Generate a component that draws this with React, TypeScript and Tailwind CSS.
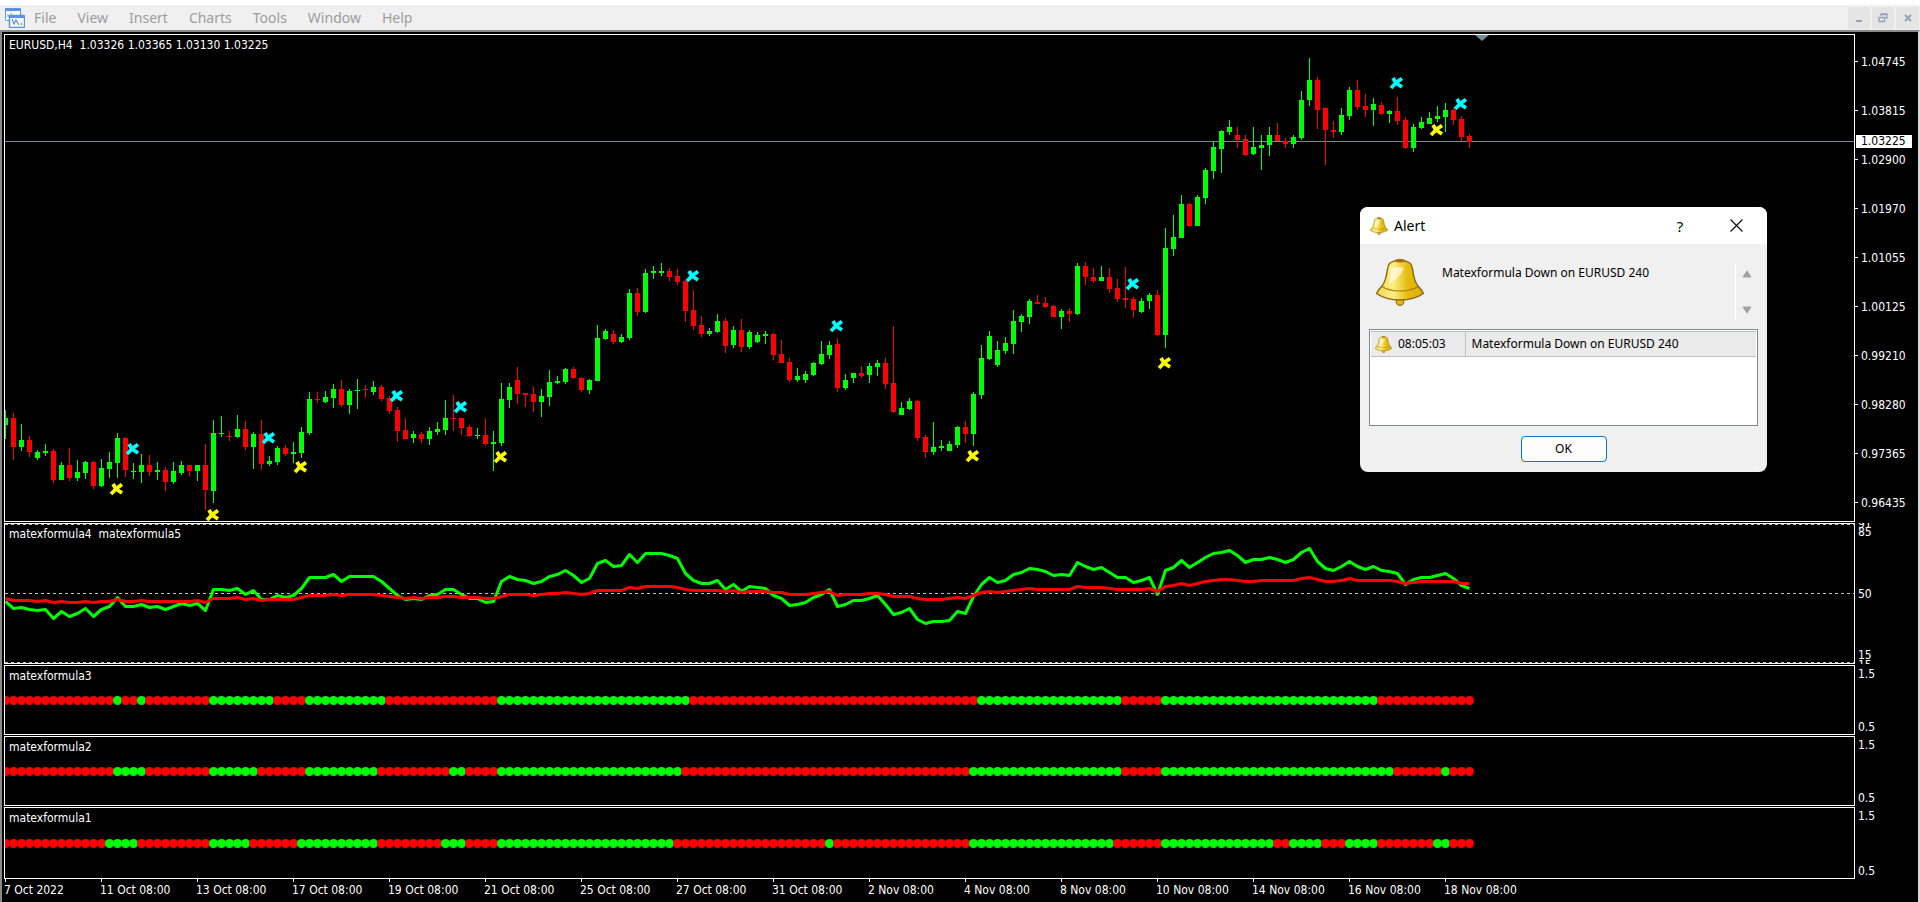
import React from 'react';

const GREEN = '#00ff00';
const RED = '#ff0000';
const BAR_STEP = 8;

const MENU_ITEMS = ['File', 'View', 'Insert', 'Charts', 'Tools', 'Window', 'Help'];

const PRICE_LABELS = [
  '1.04745', '1.03815', '1.02900', '1.01970', '1.01055',
  '1.00125', '0.99210', '0.98280', '0.97365', '0.96435',
];

const DATE_LABELS = [
  '7 Oct 2022', '11 Oct 08:00', '13 Oct 08:00', '17 Oct 08:00', '19 Oct 08:00', '21 Oct 08:00',
  '25 Oct 08:00', '27 Oct 08:00', '31 Oct 08:00', '2 Nov 08:00', '4 Nov 08:00', '8 Nov 08:00',
  '10 Nov 08:00', '14 Nov 08:00', '16 Nov 08:00', '18 Nov 08:00',
];

// [up, high, body top, body bottom, low], one entry per H4 bar
const CANDLES: number[][] = [
  [1, 375, 383, 390, 404], [0, 378, 383, 412, 425], [1, 389, 405, 412, 416], [0, 401, 405, 417, 422],
  [1, 415, 417, 423, 425], [1, 409, 416, 418, 421], [0, 414, 416, 445, 448], [1, 427, 430, 445, 445],
  [0, 413, 430, 443, 446], [1, 425, 437, 443, 446], [1, 426, 427, 438, 444], [0, 426, 427, 451, 454],
  [1, 424, 433, 451, 452], [1, 417, 427, 434, 443], [1, 398, 403, 428, 443], [0, 402, 403, 435, 442],
  [1, 428, 436, 437, 444], [1, 419, 430, 437, 448], [0, 420, 430, 437, 441], [1, 427, 435, 437, 445],
  [0, 432, 435, 447, 456], [1, 427, 436, 447, 449], [1, 426, 430, 438, 440], [0, 430, 430, 436, 441],
  [1, 430, 430, 436, 446], [0, 409, 430, 455, 475], [1, 385, 398, 456, 468], [1, 381, 398, 399, 402],
  [0, 396, 401, 402, 406], [1, 380, 394, 402, 403], [0, 386, 394, 412, 415], [1, 397, 399, 412, 434],
  [0, 385, 399, 429, 435], [1, 421, 426, 429, 431], [1, 411, 413, 427, 430], [0, 410, 413, 419, 421],
  [1, 407, 417, 419, 428], [1, 392, 397, 418, 423], [1, 357, 364, 398, 400], [0, 357, 364, 365, 368],
  [1, 356, 362, 367, 368], [1, 349, 354, 363, 373], [0, 345, 354, 370, 372], [1, 354, 356, 370, 379],
  [1, 344, 355, 356, 374], [0, 350, 354, 355, 363], [1, 346, 352, 357, 360], [0, 350, 352, 364, 366],
  [0, 361, 363, 376, 379], [0, 372, 375, 396, 407], [0, 383, 395, 404, 404], [1, 396, 399, 403, 408],
  [0, 397, 399, 404, 408], [1, 392, 396, 404, 410], [1, 387, 394, 397, 400], [1, 365, 383, 395, 400],
  [0, 360, 383, 384, 396], [0, 383, 383, 393, 400], [0, 390, 392, 401, 402], [1, 393, 400, 401, 404],
  [0, 383, 400, 409, 411], [1, 396, 407, 409, 436], [1, 348, 364, 408, 411], [1, 348, 352, 365, 373],
  [0, 332, 345, 359, 369], [0, 358, 358, 360, 372], [0, 351, 359, 367, 377], [1, 354, 361, 367, 382],
  [1, 335, 347, 362, 371], [1, 341, 346, 348, 349], [1, 333, 334, 347, 349], [0, 332, 334, 343, 344],
  [0, 342, 343, 355, 357], [1, 344, 345, 355, 359], [1, 290, 303, 346, 346], [1, 294, 296, 304, 305],
  [0, 295, 299, 307, 309], [1, 299, 302, 307, 308], [1, 254, 258, 303, 305], [0, 253, 258, 277, 281],
  [1, 234, 238, 277, 278], [1, 231, 236, 238, 244], [1, 228, 236, 238, 241], [0, 233, 236, 242, 246],
  [0, 234, 241, 247, 250], [0, 245, 246, 276, 287], [0, 255, 275, 291, 295], [0, 281, 290, 299, 302],
  [1, 293, 296, 299, 301], [1, 279, 286, 297, 298], [0, 283, 286, 311, 318], [1, 291, 295, 310, 313],
  [0, 284, 295, 312, 317], [1, 295, 297, 312, 314], [1, 297, 300, 307, 308], [1, 296, 299, 301, 309],
  [0, 298, 299, 320, 325], [0, 305, 319, 328, 328], [0, 323, 327, 345, 347], [1, 333, 341, 345, 347],
  [1, 336, 339, 345, 348], [1, 327, 328, 340, 341], [1, 306, 319, 329, 330], [1, 306, 310, 320, 324],
  [0, 303, 309, 353, 357], [1, 339, 345, 353, 355], [1, 338, 338, 343, 348], [0, 331, 338, 341, 343],
  [1, 328, 331, 340, 348], [1, 325, 328, 332, 341], [0, 323, 328, 349, 354], [0, 291, 348, 377, 378],
  [1, 367, 373, 380, 380], [1, 363, 366, 374, 375], [0, 365, 366, 403, 406], [0, 400, 402, 417, 423],
  [1, 387, 412, 417, 420], [1, 405, 411, 413, 416], [1, 406, 409, 416, 416], [1, 391, 392, 410, 413],
  [0, 386, 392, 399, 408], [1, 357, 359, 399, 411], [1, 310, 323, 360, 364], [1, 296, 301, 324, 325],
  [1, 306, 315, 330, 332], [1, 302, 308, 316, 319], [1, 275, 286, 309, 319], [1, 279, 281, 287, 297],
  [1, 264, 266, 282, 289], [0, 260, 267, 269, 269], [0, 262, 268, 272, 273], [0, 270, 271, 282, 282],
  [1, 274, 276, 282, 294], [0, 273, 276, 279, 287], [1, 228, 231, 279, 280], [0, 227, 231, 242, 250],
  [0, 233, 242, 246, 248], [1, 231, 242, 246, 246], [0, 233, 242, 254, 258], [0, 244, 253, 264, 267],
  [0, 232, 263, 265, 273], [0, 262, 264, 275, 283], [1, 263, 266, 277, 278], [1, 258, 260, 266, 274],
  [0, 255, 260, 300, 301], [1, 193, 213, 300, 313], [1, 180, 202, 214, 221], [1, 160, 169, 203, 203],
  [0, 168, 169, 191, 192], [1, 160, 162, 191, 191], [1, 133, 135, 163, 169], [1, 106, 112, 136, 144],
  [1, 95, 96, 114, 138], [1, 85, 92, 97, 100], [0, 92, 100, 105, 113], [0, 100, 104, 120, 121],
  [1, 92, 112, 119, 120], [1, 100, 110, 113, 135], [1, 92, 100, 110, 121], [0, 88, 100, 106, 106],
  [0, 103, 106, 109, 113], [1, 100, 102, 109, 113], [1, 56, 65, 103, 105], [1, 23, 45, 65, 71],
  [0, 42, 45, 75, 94], [0, 72, 73, 95, 130], [0, 86, 95, 97, 103], [1, 73, 80, 97, 100],
  [1, 52, 55, 81, 85], [0, 45, 55, 72, 75], [0, 59, 71, 75, 82], [1, 63, 69, 75, 91],
  [0, 67, 70, 79, 80], [1, 75, 76, 79, 88], [0, 62, 76, 86, 90], [0, 82, 85, 113, 114],
  [1, 89, 92, 113, 117], [1, 82, 87, 93, 94], [1, 77, 83, 89, 89], [1, 71, 81, 84, 87],
  [1, 68, 75, 82, 97], [0, 73, 75, 85, 90], [0, 81, 84, 102, 106], [0, 99, 101, 107, 113],
];

// [bar, y]
const SELL_MARKS = [[16, 414], [33, 403], [49, 361], [57, 372], [86, 241], [104, 291], [141, 249], [174, 48], [182, 69]];
const BUY_MARKS = [[14, 454], [26, 480], [37, 432], [62, 422], [121, 421], [145, 328], [179, 95]];

const FAST_LINE = [
  77, 84, 83, 85, 86, 85, 94, 87, 92, 89, 84, 92, 85, 82, 73, 82, 82, 80, 83, 82, 85, 82, 79, 81, 79, 86, 65, 65, 66, 64,
  70, 66, 75, 75, 71, 73, 71, 64, 53, 53, 53, 50, 57, 52, 52, 52, 52, 57, 64, 71, 75, 74, 75, 71, 70, 65, 65, 70, 74, 74,
  78, 77, 57, 52, 55, 56, 59, 57, 52, 50, 46, 51, 58, 54, 39, 36, 42, 41, 30, 38, 29, 29, 29, 31, 34, 49, 56, 59, 59, 56,
  65, 60, 67, 62, 63, 64, 71, 74, 81, 80, 78, 73, 70, 65, 82, 80, 76, 76, 74, 71, 80, 90, 88, 84, 95, 99, 97, 97, 96, 87,
  89, 72, 60, 53, 58, 56, 50, 48, 44, 45, 47, 51, 50, 51, 38, 42, 45, 43, 48, 53, 53, 58, 56, 53, 70, 46, 43, 36, 43, 38,
  33, 29, 28, 26, 31, 38, 35, 35, 33, 35, 38, 35, 28, 24, 37, 44, 46, 42, 37, 42, 45, 42, 46, 47, 49, 60, 55, 53, 53, 51,
  49, 54, 61, 64,
];

const SLOW_LINE = [
  74, 76, 76, 76, 77, 76, 78, 77, 78, 78, 77, 78, 77, 77, 75, 77, 77, 76, 77, 77, 77, 77, 77, 77, 76, 78, 74, 74, 74, 73,
  75, 74, 76, 75, 75, 75, 75, 73, 71, 71, 71, 70, 71, 70, 70, 70, 70, 71, 72, 73, 74, 73, 74, 73, 73, 72, 72, 73, 73, 73,
  74, 74, 72, 70, 70, 70, 71, 70, 69, 69, 68, 69, 70, 69, 66, 66, 66, 66, 63, 64, 62, 62, 62, 62, 63, 65, 66, 66, 66, 66,
  67, 66, 68, 67, 67, 67, 68, 68, 70, 70, 70, 69, 68, 67, 71, 70, 70, 70, 69, 69, 70, 72, 72, 72, 74, 75, 75, 75, 74, 73,
  74, 71, 68, 67, 68, 67, 66, 65, 64, 65, 65, 65, 65, 65, 62, 63, 63, 63, 64, 65, 65, 65, 65, 64, 67, 62, 61, 59, 61, 59,
  57, 56, 55, 55, 56, 57, 57, 56, 56, 56, 56, 56, 54, 53, 55, 57, 57, 56, 54, 56, 56, 56, 56, 56, 57, 59, 58, 57, 57, 57,
  57, 57, 59, 59,
];

// Run lengths of the trend dots; every strip starts red and alternates
const STRIPS = [
  { name: 'matexformula3', runs: [14, 1, 2, 1, 8, 8, 4, 10, 14, 24, 36, 18, 5, 27, 12] },
  { name: 'matexformula2', runs: [14, 4, 8, 6, 6, 9, 9, 2, 4, 23, 36, 19, 5, 29, 6, 1, 3] },
  { name: 'matexformula1', runs: [13, 4, 9, 5, 6, 10, 8, 3, 4, 22, 19, 1, 17, 18, 6, 14, 2, 4, 3, 4, 7, 2, 3] },
];

const toPoints = (values: number[]) => values.map((y, i) => `${i * BAR_STEP + 0.5},${y + 0.5}`).join(' ');

function AppIcon() {
  return (
    <svg width="20" height="20" viewBox="0 0 20 20" fill="none" aria-hidden="true">
      <rect x="0.5" y="0.5" width="15" height="12" rx="1" fill="#fff" stroke="#5b92e5" />
      <path d="M0 0h16v3H0z" fill="#5b92e5" />
      <path d="M3 9V6M6 8V5M3 8h3" stroke="#5b92e5" />
      <rect x="4.5" y="7.5" width="15" height="12" rx="1" fill="#fff" stroke="#5b92e5" strokeWidth="1.5" />
      <path d="M4 7h16v3H4z" fill="#5b92e5" />
      <path d="M7 11l2 5 2-4 3 5M16 15l1 2" stroke="#5b92e5" strokeWidth="1.2" />
    </svg>
  );
}

function BellIcon({ size, id }: { size: number; id: string }) {
  return (
    <svg width={size} height={size} viewBox="0 0 48 48" aria-hidden="true">
      <defs>
        <linearGradient id={id} x1="0" y1="0" x2="1" y2="0">
          <stop offset="0" stopColor="#f3d548" />
          <stop offset="0.35" stopColor="#fdf08a" />
          <stop offset="0.65" stopColor="#e6bc10" />
          <stop offset="1" stopColor="#d9ac00" />
        </linearGradient>
      </defs>
      <ellipse cx="24" cy="43.500" rx="4" ry="4" fill="#e8b818" stroke="#8a6414" />
      <path
        d="M14 5Q19 2 24 1.500Q29 2 34 5Q36 7 36.500 11Q38 23 42 28Q46 32 47.500 35.500Q38 42 24 42Q10 42 .5 35.500Q2 32 6 28Q10 23 11.500 11Q12 7 14 5Z"
        fill={`url(#${id})`}
        stroke="#8a6414"
        strokeWidth="1.400"
      />
      <path d="M6 28.500Q13 33 24 33Q35 33 42 28.500" fill="none" stroke="#a87a10" strokeWidth="1.200" />
      <path d="M18 3Q24 -1 30 3Q24 6 18 3Z" fill="#a86c0c" />
      <path d="M15 10Q21 8 28 10Q24 20 13 26Z" fill="#fffbe0" opacity="0.75" />
    </svg>
  );
}

function Cross({ bar, y, color }: { bar: number; y: number; color: string }) {
  return (
    <g transform={`translate(${bar * BAR_STEP} ${y})`} stroke={color} fill="none">
      <path d="M-4 -5L-1 0L5 4" strokeWidth="3.8" />
      <path d="M5 -4.500L0 -1L-6 5" strokeWidth="3.8" />
    </g>
  );
}

function MenuBar() {
  return (
    <header className="flex items-center justify-between bg-[#f0f0f0] border-t-[5px] border-white h-[30px] pl-[5px] pr-px">
      <div className="flex items-center gap-[9px]">
        <AppIcon />
        <nav className="flex gap-[21px] font-['Noto_Sans',sans-serif] text-[14px] leading-5 text-[#9d9d9d]">
          {MENU_ITEMS.map(item => <button key={item} type="button">{item}</button>)}
        </nav>
      </div>
      <div className="flex gap-0.5 text-[#94a3b3]">
        <button type="button" aria-label="Minimize" className="flex items-center justify-center w-[22px] h-[22px] rounded-xs bg-[#e5e5e5]">
          <svg width="12" height="12" viewBox="0 0 12 12"><path d="M3 9h6" stroke="currentColor" strokeWidth="2" /></svg>
        </button>
        <button type="button" aria-label="Restore" className="flex items-center justify-center w-[22px] h-[22px] rounded-xs bg-[#e5e5e5]">
          <svg width="10" height="10" viewBox="0 0 10 10" fill="none" stroke="currentColor">
            <path d="M3 3V1h6v4H7M3 1.500h6" strokeWidth="1.300" />
            <path d="M1 4.500h5.500v4H1z" strokeWidth="1.300" />
          </svg>
        </button>
        <button type="button" aria-label="Close" className="flex items-center justify-center w-[23px] h-[22px] rounded-xs bg-[#e5e5e5]">
          <svg width="8" height="8" viewBox="0 0 8 8"><path d="M1 1l6 6M7 1L1 7" stroke="currentColor" strokeWidth="2" /></svg>
        </button>
      </div>
    </header>
  );
}

function PaneTitle({ children }: { children: React.ReactNode }) {
  return <h2 className="absolute left-1 top-[3px] whitespace-pre">{children}</h2>;
}

function PricePane() {
  return (
    <div className="flex h-[488px]">
      <section className="relative flex-1 border border-white overflow-hidden">
        <svg className="block w-full h-full" role="img" aria-label="EURUSD H4 candles">
          <g shapeRendering="crispEdges">
            <line x1="0" x2="100%" y1="106.500" y2="106.500" stroke="#778899" />
            {CANDLES.map(([up, high, top, bottom, low], i) => (
              <g key={i} fill={up ? GREEN : RED}>
                <rect x={i * BAR_STEP} y={high} width="1" height={low - high} />
                <rect x={i * BAR_STEP - 2} y={top} width="5" height={bottom - top} />
              </g>
            ))}
          </g>
          <path d="M1470 0h14l-7 6z" fill="#778899" />
          {SELL_MARKS.map(([bar, y]) => <Cross key={bar} bar={bar} y={y} color="#00ffff" />)}
          {BUY_MARKS.map(([bar, y]) => <Cross key={bar} bar={bar} y={y} color="#ffff00" />)}
        </svg>
        <PaneTitle>{'EURUSD,H4  1.03326 1.03365 1.03130 1.03225'}</PaneTitle>
      </section>
      <div className="relative w-[63px] pt-[3px]">
        {PRICE_LABELS.map(label => (
          <div key={label} className="flex items-center gap-[3px] h-[49px]">
            <span className="w-[3px] h-px bg-white" />
            {label}
          </div>
        ))}
        <div className="absolute left-px top-[101px] w-14 h-[13px] pl-[5px] leading-[13px] bg-white text-black">1.03225</div>
      </div>
    </div>
  );
}

function OscillatorPane() {
  return (
    <div className="flex h-[141px]">
      <section className="relative flex-1 border border-white overflow-hidden">
        <svg className="block w-full h-full" role="img" aria-label="matexformula4 and matexformula5">
          <g stroke="#c0c0c0" strokeDasharray="3 3" shapeRendering="crispEdges">
            <line x1="0" x2="100%" y1="0.500" y2="0.500" />
            <line x1="0" x2="100%" y1="69.500" y2="69.500" />
            <line x1="0" x2="100%" y1="138.500" y2="138.500" />
          </g>
          <polyline points={toPoints(FAST_LINE)} fill="none" stroke={GREEN} strokeWidth="3" strokeLinejoin="round" />
          <polyline points={toPoints(SLOW_LINE)} fill="none" stroke={RED} strokeWidth="3" strokeLinejoin="round" />
        </svg>
        <PaneTitle>{'matexformula4  matexformula5'}</PaneTitle>
      </section>
      <div className="relative w-[63px] pl-[3px] overflow-hidden flex flex-col justify-between py-0.5">
        <span className="absolute left-[3px] -top-1.5">91</span>
        <span>85</span>
        <span>50</span>
        <span>15</span>
        <span className="absolute left-[3px] -bottom-2">15</span>
      </div>
    </div>
  );
}

function StripPane({ name, runs, last }: { name: string; runs: number[]; last: boolean }) {
  const dots = runs.flatMap((length, i) => Array<string>(length).fill(i % 2 ? GREEN : RED));
  return (
    <div className="flex">
      <section className={`relative flex-1 border border-white overflow-hidden ${last ? 'h-[72px]' : 'h-[70px]'}`}>
        <svg className="block w-full h-full" role="img" aria-label={name}>
          {dots.map((color, i) => (
            <circle key={i} cx={i * BAR_STEP + 0.5} cy={last ? 35.5 : 34.5} r="4.500" fill={color} />
          ))}
        </svg>
        <PaneTitle>{name}</PaneTitle>
      </section>
      <div className="flex flex-col justify-between w-[63px] pl-[3px] pt-0.5 pb-px">
        <span>1.5</span>
        <span>0.5</span>
      </div>
    </div>
  );
}

function TimeAxis() {
  return (
    <div className="flex h-[23px] overflow-hidden leading-4">
      {DATE_LABELS.map(label => (
        <div key={label} className="w-24 shrink-0 whitespace-nowrap">
          <div className="ml-px w-px h-[3px] bg-white" />
          {label}
        </div>
      ))}
    </div>
  );
}

function AlertDialog() {
  return (
    <div
      role="dialog"
      aria-labelledby="alert-title"
      className="absolute right-[153px] top-[207px] w-[407px] rounded-lg overflow-hidden bg-[#f0f0f0] text-black font-['Noto_Sans',sans-serif]"
    >
      <div className="flex items-center h-[37px] pl-[10px] pr-6 bg-white">
        <BellIcon size={18} id="bell-title" />
        <h1 id="alert-title" className="ml-1.5 flex-1 text-[14px] leading-5">Alert</h1>
        <button type="button" aria-label="Help" className="w-4 mr-[42px] text-[15px] leading-5">?</button>
        <button type="button" aria-label="Close">
          <svg width="13" height="13" viewBox="0 0 13 13"><path d="M.5.5l12 12M12.500.5l-12 12" stroke="#111" strokeWidth="1.200" /></svg>
        </button>
      </div>

      <div className="flex h-[85px] pt-[14px] pl-4 pr-2.5">
        <BellIcon size={48} id="bell-large" />
        <p className="flex-1 pl-[18px] pt-2">Matexformula Down on EURUSD 240</p>
        <div className="flex flex-col items-center justify-between w-[22px] h-14 mt-1.5 py-1.5 border-l border-white">
          <button type="button" aria-label="Scroll up">
            <svg width="10" height="8" viewBox="0 0 10 8"><path d="M5 1l4 6H1z" fill="#a0a0a0" stroke="#a0a0a0" strokeLinejoin="round" /></svg>
          </button>
          <button type="button" aria-label="Scroll down">
            <svg width="10" height="8" viewBox="0 0 10 8"><path d="M5 7l4-6H1z" fill="#a0a0a0" stroke="#a0a0a0" strokeLinejoin="round" /></svg>
          </button>
        </div>
      </div>

      <div className="mx-[9px] h-[97px] p-px border border-[#828790] bg-white">
        <table className="w-full border-collapse">
          <tbody>
            <tr className="h-[25px] bg-[#ebebeb] border-y border-[#c0c0c0]">
              <td className="w-[94px] p-0 border-r border-[#c0c0c0]">
                <div className="flex items-center gap-1.5 pl-1">
                  <BellIcon size={17} id="bell-row" />
                  08:05:03
                </div>
              </td>
              <td className="py-0 pl-1.5">Matexformula Down on EURUSD 240</td>
            </tr>
          </tbody>
        </table>
      </div>

      <div className="flex justify-center pt-[10px] pb-[10px]">
        <button type="button" className="w-[86px] h-[26px] rounded border border-[#0078d7] bg-[#fdfdfd]">OK</button>
      </div>
    </div>
  );
}

export default function App() {
  return (
    <div className="relative flex flex-col min-h-screen bg-black text-white font-['DejaVu_Sans_Condensed','DejaVu_Sans',sans-serif] text-[12px] leading-[14px]">
      <MenuBar />
      <main className="flex-1 border-2 border-b-0 border-t-[#8a8a8a] border-l-[#8a8a8a] border-r-[#d8d8d8] pt-0.5 pl-0.5">
        <div className="flex flex-col gap-px">
          <PricePane />
          <OscillatorPane />
          {STRIPS.map((strip, i) => (
            <StripPane key={strip.name} name={strip.name} runs={strip.runs} last={i === STRIPS.length - 1} />
          ))}
        </div>
        <TimeAxis />
      </main>
      <AlertDialog />
    </div>
  );
}
